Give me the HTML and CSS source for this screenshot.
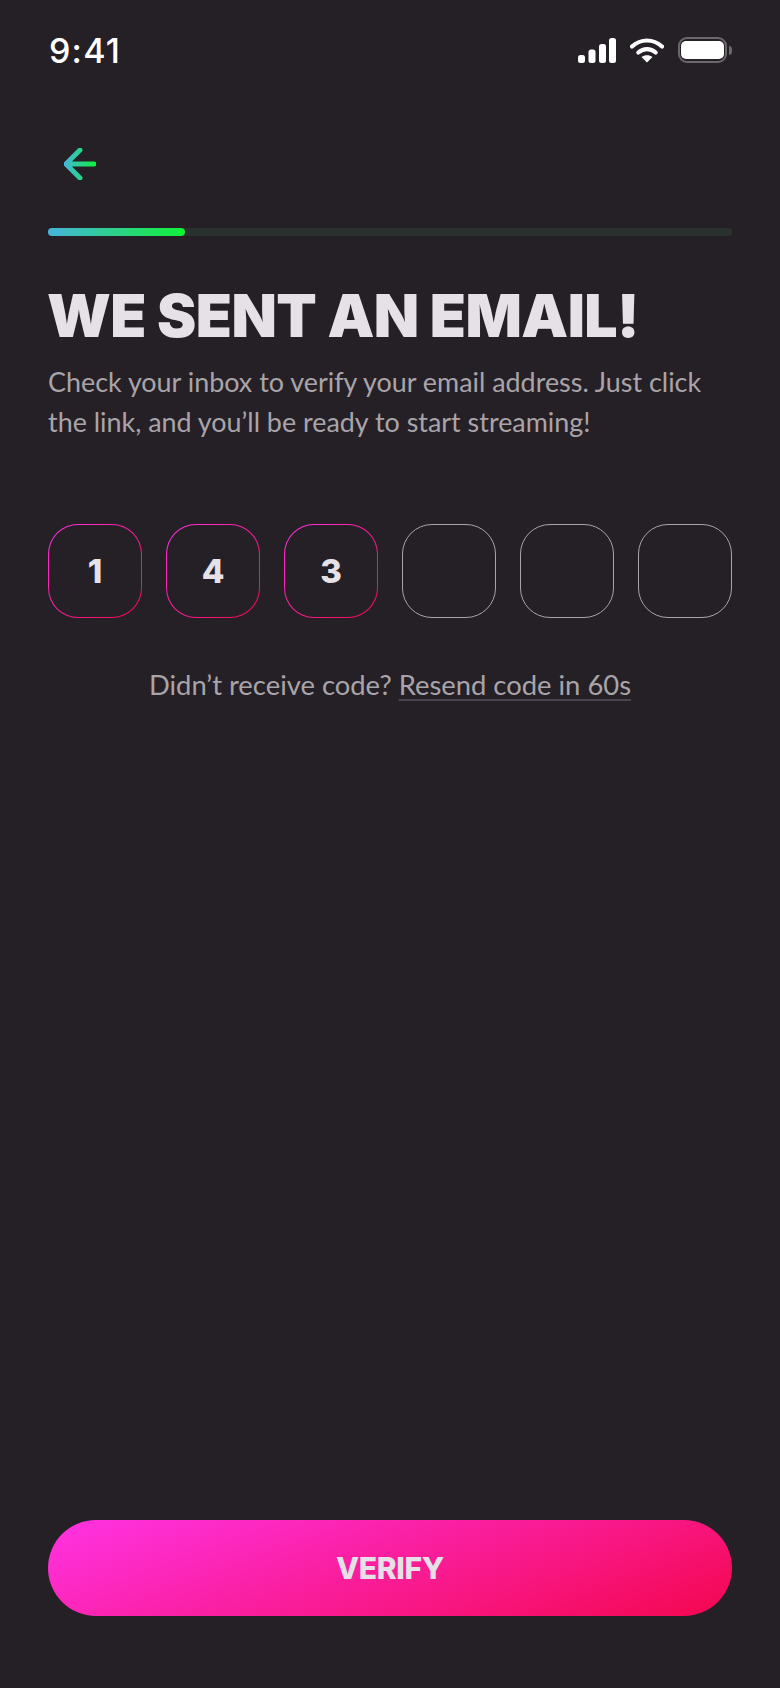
FILE: index.html
```html
<!DOCTYPE html>
<html lang="en">
<head>
    <meta charset="UTF-8">
    <meta name="viewport" content="width=device-width, initial-scale=1.0">
    <title>Verify Email</title>
    <link rel="stylesheet" href="styles.css">
</head>
<body>
<div class="screen">
    <div class="status-bar">
        <span class="status-time">9:41</span>
        <div class="status-icons">
            <svg width="38" height="25" viewBox="0 0 38 25" aria-hidden="true">
                <rect x="0" y="17" width="7" height="8" rx="2.5" fill="#fff"/>
                <rect x="10.500" y="11.500" width="7" height="13.500" rx="2.5" fill="#fff"/>
                <rect x="21" y="6" width="7" height="19" rx="2.5" fill="#fff"/>
                <rect x="31" y="0" width="7" height="25" rx="2.5" fill="#fff"/>
            </svg>
            <svg width="34" height="25" viewBox="0 0 34 25" aria-hidden="true">
                <path d="M2 8.500C11 .5 23 .5 32 8.500" fill="none" stroke="#fff" stroke-width="4.200" stroke-linecap="round"/>
                <path d="M8.300 14.500C13.500 10 20.500 10 25.700 14.500" fill="none" stroke="#fff" stroke-width="4.200" stroke-linecap="round"/>
                <path d="M17 24.500L11.500 19C14.800 16.500 19.200 16.500 22.500 19Z" fill="#fff"/>
            </svg>
            <div class="battery">
                <div class="battery-body"><div class="battery-fill"></div></div>
                <div class="battery-nub"></div>
            </div>
        </div>
    </div>

    <button class="back-btn" aria-label="Back">
        <svg width="32" height="32" viewBox="0 0 32 32" aria-hidden="true">
            <defs>
                <linearGradient id="arrowGrad" gradientUnits="userSpaceOnUse" x1="0" y1="16" x2="32" y2="16">
                    <stop offset="0" stop-color="#45b5dc"/>
                    <stop offset="1" stop-color="#0cf238"/>
                </linearGradient>
            </defs>
            <path d="M30 16H2M16 2L2 16L16 30" fill="none" stroke="url(#arrowGrad)" stroke-width="5" stroke-linecap="round" stroke-linejoin="round"/>
        </svg>
    </button>

    <div class="progress-track">
        <div class="progress-fill" style="width: 20%"></div>
    </div>

    <h1 class="title">WE SENT AN EMAIL!</h1>
    <p class="subtitle">Check your inbox to verify your email address. Just click the link, and you’ll be ready to start streaming!</p>

    <div class="code-row">
        <div class="code-box filled">1</div>
        <div class="code-box filled">4</div>
        <div class="code-box filled">3</div>
        <div class="code-box"></div>
        <div class="code-box"></div>
        <div class="code-box"></div>
    </div>

    <p class="resend">Didn’t receive code? <a class="resend-link" href="#">Resend code in 60s</a></p>

    <button class="verify-btn">VERIFY</button>
</div>
</body>
</html>
```

FILE: styles.css
```css
* {
    box-sizing: border-box;
}
body {
    margin: 0;
    background-color: #252026;
    font-family: Lato, "Open Sans", sans-serif;
}
.screen {
    display: flex;
    flex-direction: column;
    height: 1688px;
    padding: 0 48px 72px;
}
.status-bar {
    display: flex;
    justify-content: space-between;
    align-items: center;
    height: 50px;
    margin-top: 25px;
}
.status-time {
    margin-left: 1px;
    font-family: Inter, sans-serif;
    font-size: 34px;
    font-weight: 500;
    letter-spacing: 1.2px;
    color: #fff;
}
.status-icons {
    display: flex;
    align-items: center;
    gap: 14px;
}
.battery {
    display: flex;
    align-items: center;
    gap: 2px;
}
.battery-body {
    width: 49px;
    height: 26px;
    padding: 2px 1px;
    border: 2px solid #6b676c;
    border-radius: 9px;
}
.battery-fill {
    height: 100%;
    background-color: #fff;
    border-radius: 5px;
}
.battery-nub {
    width: 3px;
    height: 9px;
    background-color: #6b676c;
    border-radius: 0 3px 3px 0;
}
.back-btn {
    align-self: flex-start;
    display: flex;
    width: 32px;
    height: 32px;
    margin: 73px 0 0 16px;
    padding: 0;
    border: none;
    background: none;
    cursor: pointer;
}
.progress-track {
    height: 8px;
    margin-top: 48px;
    background-color: #2a312e;
    border-radius: 4px;
}
.progress-fill {
    height: 100%;
    background: linear-gradient(90deg, #47b3dc, #10f236);
    border-radius: 4px;
}
.title {
    margin: 44px 0 0 -1px;
    font-family: Inter, sans-serif;
    font-size: 59px;
    line-height: 72px;
    font-weight: 900;
    letter-spacing: -0.55px;
    color: #e6e1e6;
    white-space: nowrap;
}
.subtitle {
    margin: 10px 0 0;
    font-size: 26.9px;
    line-height: 40px;
    color: #a9a4a9;
}
.code-row {
    display: flex;
    justify-content: space-between;
    margin-top: 82px;
}
.code-box {
    display: flex;
    justify-content: center;
    align-items: center;
    width: 94px;
    height: 94px;
    border: 1.5px solid #a9a4a9;
    border-radius: 30px;
    font-family: Inter, sans-serif;
    font-size: 33px;
    font-weight: 800;
    color: #e6e1e6;
}
.code-box.filled {
    border-color: transparent;
    background: linear-gradient(#252026, #252026) padding-box, linear-gradient(135deg, #ff33e4, #f4074f) border-box;
}
.resend {
    margin: 49px 0 0;
    font-size: 27.4px;
    line-height: 36px;
    text-align: center;
    color: #a9a4a9;
}
.resend-link {
    color: #a9a4a9;
    text-decoration: underline 2px #4a4550;
    text-underline-offset: 4px;
    text-decoration-skip-ink: none;
}
.verify-btn {
    width: 100%;
    height: 96px;
    margin-top: auto;
    border: none;
    border-radius: 48px;
    background: linear-gradient(160deg, #ff33e4 0%, #f4074f 100%);
    font-family: Inter, sans-serif;
    font-size: 30px;
    font-weight: 800;
    letter-spacing: -0.3px;
    color: #e6e1e6;
    cursor: pointer;
}
```
